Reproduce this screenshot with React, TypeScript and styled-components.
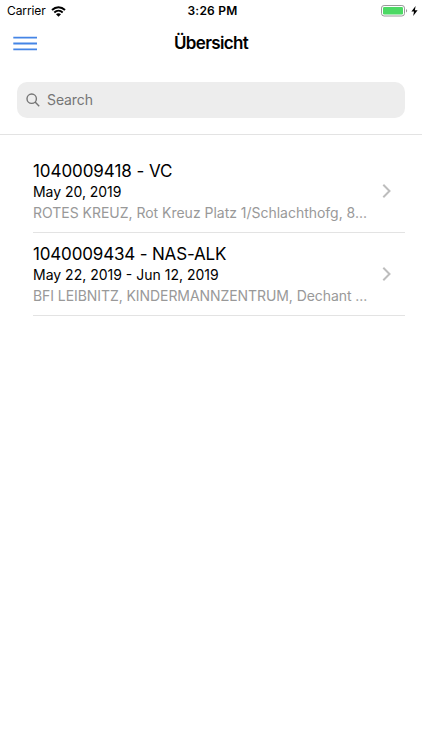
import React from "react";
import styled, { createGlobalStyle } from "styled-components";

const GlobalStyle = createGlobalStyle`
  * { box-sizing: border-box; }
  html, body { margin: 0; background: #fff; overflow: hidden; }
  body { font-family: Inter, "Liberation Sans", sans-serif; color: #000; }
`;

const Screen = styled.div`
  height: 750px;
  background: #fff;
  display: flex;
  flex-direction: column;
`;

const StatusBar = styled.header`
  height: 22px;
  flex: none;
  display: grid;
  grid-template-columns: 1fr auto 1fr;
  align-items: center;
  padding: 0 4px 0 7px;
`;

const Carrier = styled.div`
  display: flex;
  align-items: center;
  gap: 5px;
  font-size: 12px;
  line-height: 22px;
  letter-spacing: -0.1px;
`;

const Clock = styled.div`
  font-size: 12px;
  font-weight: 600;
  line-height: 22px;
  letter-spacing: 0.22px;
`;

const Power = styled.div`
  display: flex;
  align-items: center;
  justify-content: flex-end;
  gap: 3px;
`;

const NavBar = styled.nav`
  height: 43px;
  flex: none;
  display: grid;
  grid-template-columns: 1fr auto 1fr;
  align-items: center;
  padding: 0 13px;
`;

const MenuButton = styled.button`
  display: block;
  width: 25px;
  height: 16px;
  padding: 0;
  border: 0;
  background: none;
  svg { display: block; }
`;

const NavTitle = styled.h1`
  margin: 0 0 1px;
  font-size: 17px;
  font-weight: 600;
  line-height: 24px;
  letter-spacing: -0.65px;
`;

const SearchArea = styled.section`
  flex: none;
  height: 70px;
  padding: 17px 17px 0 17px;
  border-bottom: 1px solid #e3e3e3;
`;

const SearchField = styled.div`
  height: 36px;
  display: flex;
  align-items: center;
  gap: 7px;
  padding: 0 0 1px 9px;
  border-radius: 10px;
  background: #ededed;
  color: #757575;
  font-size: 14px;
  letter-spacing: -0.1px;
`;

const List = styled.ul`
  margin: 0;
  padding: 15px 17px 0 33px;
  list-style: none;
`;

const Item = styled.li`
  height: 83px;
  display: flex;
  align-items: center;
  justify-content: space-between;
  padding-right: 14px;
  border-bottom: 1px solid #e3e3e3;
`;

const Details = styled.div`
  padding-top: 2px;
  white-space: nowrap;
`;

const CourseTitle = styled.h2<{ $tracking: number }>`
  margin: 0;
  font-size: 17px;
  font-weight: 400;
  line-height: 20px;
  letter-spacing: ${(p) => p.$tracking}px;
`;

const Dates = styled.p<{ $tracking: number }>`
  margin: 0;
  font-size: 14px;
  line-height: 21px;
  letter-spacing: ${(p) => p.$tracking}px;
`;

const Place = styled.p<{ $tracking: number }>`
  margin: 0;
  color: #999;
  font-size: 14px;
  line-height: 21px;
  letter-spacing: ${(p) => p.$tracking}px;
`;

const courses = [
  {
    title: "1040009418 - VC",
    dates: "May 20, 2019",
    place: "ROTES KREUZ, Rot Kreuz Platz 1/Schlachthofg, 8...",
    tracking: [-0.07, -0.04, -0.02],
  },
  {
    title: "1040009434 - NAS-ALK",
    dates: "May 22, 2019 - Jun 12, 2019",
    place: "BFI LEIBNITZ, KINDERMANNZENTRUM, Dechant ...",
    tracking: [-0.17, 0, -0.07],
  },
];

const WifiIcon = () => (
  <svg width="15" height="11" viewBox="0 0 15 11" fill="none" stroke="#000" strokeWidth="1.9">
    <path d="M1 4C4.8 .3 10.2 .3 14 4" />
    <path d="M3.3 6.5C5.8 4.2 9.2 4.2 11.7 6.5" />
    <path d="M5 8.2C6.5 6.9 8.5 6.9 10 8.2L7.5 10.7Z" fill="#000" stroke="none" />
  </svg>
);

const BatteryIcon = () => (
  <svg width="27" height="12" viewBox="0 0 27 12">
    <rect x=".5" y=".5" width="23" height="10.5" rx="2.6" fill="#fff" stroke="#999" />
    <rect x="2" y="2" width="20" height="7.5" rx="1.2" fill="#4cd964" />
    <path d="M25 4C26.5 4.6 26.5 7 25 7.6Z" fill="#999" />
  </svg>
);

const BoltIcon = () => (
  <svg width="7" height="10" viewBox="0 0 7 10">
    <path d="M4.6 0L.4 5.6H3L2.2 10L6.6 4.2H3.9Z" fill="#000" />
  </svg>
);

const MenuIcon = () => (
  <svg width="25" height="16" viewBox="0 0 25 16" stroke="#4585e6" strokeWidth="1.8">
    <path d="M.3 1.6H24M.3 7.5H24M.3 13.4H24" />
  </svg>
);

const SearchIcon = () => (
  <svg width="14" height="14" viewBox="0 0 14 14" fill="none" stroke="#757575" strokeWidth="1.4">
    <circle cx="5.7" cy="5.7" r="4.7" />
    <path d="M9.1 9.1L13.2 13.2" />
  </svg>
);

const ChevronIcon = () => (
  <svg width="9" height="14" viewBox="0 0 9 14" fill="none" stroke="#bdbdbd" strokeWidth="2">
    <path d="M1.3 .8L7.5 7L1.3 13.2" />
  </svg>
);

export default function App() {
  return (
    <Screen>
      <GlobalStyle />
      <StatusBar>
        <Carrier>
          Carrier
          <WifiIcon />
        </Carrier>
        <Clock>3:26 PM</Clock>
        <Power>
          <BatteryIcon />
          <BoltIcon />
        </Power>
      </StatusBar>
      <NavBar>
        <MenuButton aria-label="Menu">
          <MenuIcon />
        </MenuButton>
        <NavTitle>Übersicht</NavTitle>
      </NavBar>
      <SearchArea>
        <SearchField>
          <SearchIcon />
          Search
        </SearchField>
      </SearchArea>
      <List>
        {courses.map((course) => (
          <Item key={course.title}>
            <Details>
              <CourseTitle $tracking={course.tracking[0]}>{course.title}</CourseTitle>
              <Dates $tracking={course.tracking[1]}>{course.dates}</Dates>
              <Place $tracking={course.tracking[2]}>{course.place}</Place>
            </Details>
            <ChevronIcon />
          </Item>
        ))}
      </List>
    </Screen>
  );
}
